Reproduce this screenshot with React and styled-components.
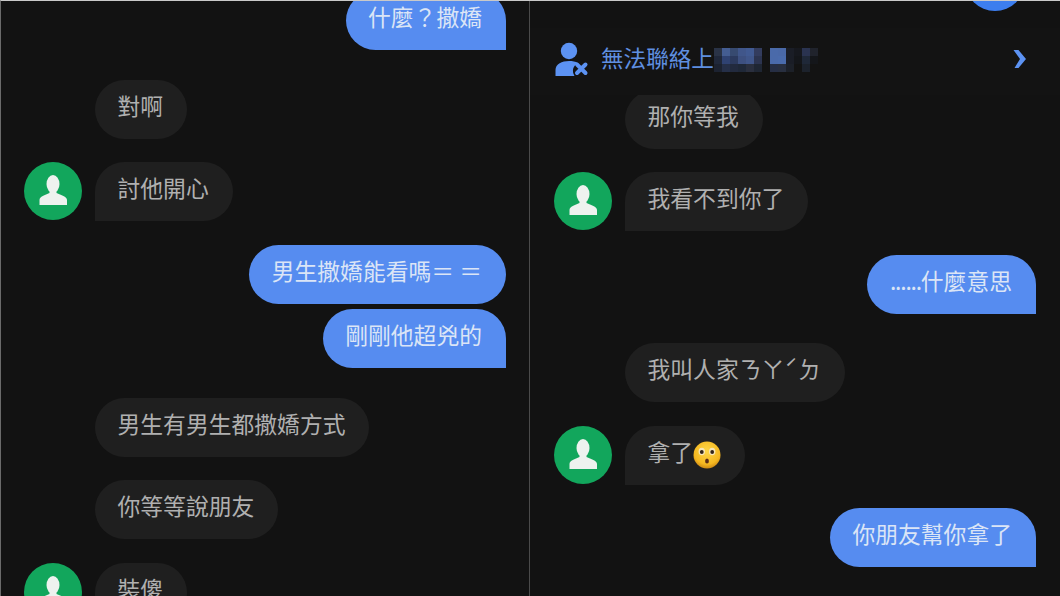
import React from 'react';
import styled, { createGlobalStyle } from 'styled-components';

const GlobalStyle = createGlobalStyle`
  html, body {
    margin: 0;
    padding: 0;
    background: #121212;
  }
`;

const Page = styled.div`
  width: 1060px;
  height: 596px;
  box-sizing: border-box;
  display: grid;
  grid-template-columns: 528px 1px 530px;
  border-top: 1px solid #c9c9c9;
  border-left: 1px solid #6a6a6a;
  background: #121212;
  overflow: hidden;
  font-family: "Noto Sans CJK TC", "Noto Sans", sans-serif;
`;

const Divider = styled.div`
  background: #4a4a4a;
`;

const Panel = styled.div`
  display: flex;
  flex-direction: column;
  padding: 0 ${(p) => p.$right}px 0 ${(p) => p.$left}px;
  min-width: 0;
  overflow: hidden;
`;

const Row = styled.div`
  display: flex;
  flex: none;
  justify-content: ${(p) => (p.$mine ? 'flex-end' : 'flex-start')};
  gap: 13px;
  margin-top: ${(p) => p.$top}px;
  padding-left: ${(p) => (p.$indent ? 71 : 0)}px;
`;

const Bubble = styled.div`
  flex: none;
  height: 59px;
  box-sizing: border-box;
  display: flex;
  align-items: center;
  padding: 0 24px 6px 22.5px;
  font-size: 22.8px;
  line-height: 1;
  white-space: pre;
  color: ${(p) => (p.$mine ? '#dbe5f6' : '#b0b0b0')};
  background: ${(p) => (p.$mine ? '#568cf0' : '#1f1f1f')};
  border-radius: 30px;
  ${(p) => p.$tail && (p.$mine ? 'border-bottom-right-radius: 0;' : 'border-bottom-left-radius: 0;')}
`;

const Dots = styled.span`
  letter-spacing: -1.2px;
`;

const AvatarWrap = styled.div`
  flex: none;
  width: 58px;
  height: 58px;
`;

const TopStub = styled.div`
  flex: none;
  width: 60px;
  height: 60px;
  margin: -50px 11px 0 auto;
  border-radius: 50%;
  background: #3d7eee;
`;

const Banner = styled.div`
  position: relative;
  z-index: 1;
  flex: none;
  height: 67px;
  margin: 17px -24px 0;
  padding: 0 33px 0 25px;
  display: flex;
  align-items: center;
  background: #131313;
  color: #5f8fe0;
  font-size: 22.6px;
  line-height: 1;
`;

const UserIconWrap = styled.div`
  flex: none;
  width: 34px;
  height: 36px;
  margin-bottom: 4px;
`;

const BannerText = styled.span`
  margin: 0 0 6px 12px;
`;

const Mosaic = styled.div`
  display: grid;
  grid-template-columns: repeat(13, 8px);
  grid-auto-rows: 8px;
  margin-bottom: 4px;
`;

const Cell = styled.div`
  background: ${(p) => p.$color};
`;

const ChevronWrap = styled.div`
  flex: none;
  width: 14px;
  height: 20px;
  margin: 0 0 5px auto;
`;

const Avatar = () => (
  <AvatarWrap>
    <svg width="58" height="58" viewBox="0 0 58 58">
      <circle cx="29" cy="29" r="29" fill="#12a65c" />
      <ellipse cx="29" cy="22" rx="6.5" ry="9" fill="#eef2ef" />
      <path d="M25.5 28 L25.5 31 C21 33 15.5 34.5 15.5 38 L15.5 43 L43 43 L43 38 C43 34.5 37 33 32.5 31 L32.5 28 Z" fill="#eef2ef" />
    </svg>
  </AvatarWrap>
);

const UserOffIcon = () => (
  <UserIconWrap>
    <svg width="34" height="36" viewBox="0 0 34 36">
      <circle cx="14" cy="9" r="8.2" fill="#5c92f2" />
      <path d="M0.5 34 L0.5 28 C0.5 22 7 19 14 19 C17.5 19 20.5 19.5 23 21 C18 23.5 16.5 29 19.5 34 Z" fill="#5c92f2" />
      <path d="M22 22.5 L30.5 31 M30.5 22.5 L22 31" stroke="#5c92f2" strokeWidth="4" strokeLinecap="round" />
    </svg>
  </UserIconWrap>
);

const Surprised = () => (
  <svg width="28" height="28" viewBox="0 0 28 28" style={{ flex: 'none', marginTop: 5 }}>
    <defs>
      <radialGradient id="face" cx="50%" cy="35%" r="70%">
        <stop offset="0%" stopColor="#fdd648" />
        <stop offset="70%" stopColor="#f5b820" />
        <stop offset="100%" stopColor="#c07a10" />
      </radialGradient>
    </defs>
    <circle cx="14" cy="14" r="13.5" fill="url(#face)" />
    <ellipse cx="8.8" cy="10.5" rx="3.2" ry="3.8" fill="#f6e6b8" />
    <ellipse cx="19.2" cy="10.5" rx="3.2" ry="3.8" fill="#f6e6b8" />
    <circle cx="8.8" cy="11" r="1.9" fill="#33251a" />
    <circle cx="19.2" cy="11" r="1.9" fill="#33251a" />
    <ellipse cx="14" cy="20" rx="1.9" ry="2.5" fill="#5a2c16" />
  </svg>
);

const mosaicColors = [
  '#2a3346', '#445d92', '#374a70', '#40568a', '#415a92', '#333c5e', '#131313', '#4a6aaa', '#4a69a8', '#1a1d26', '#16181e', '#2a3350', '#20232c',
  '#20283a', '#2f4272', '#2c3a5e', '#3d5080', '#40568a', '#2c3450', '#131313', '#4a6aaa', '#4a6bac', '#1a1d26', '#14161a', '#1f2838', '#14161a',
  '#1c2230', '#252f48', '#222a3e', '#1f2838', '#2a2f3e', '#1f2633', '#131313', '#262e44', '#282f40', '#1c2028', '#131313', '#1c222c', '#131313',
];

const leftMessages = [
  { text: '什麼？撒嬌', mine: true, tail: true, top: -10 },
  { text: '對啊', top: 30 },
  { text: '討他開心', avatar: true, tail: true, top: 23 },
  { text: '男生撒嬌能看嗎＝ ＝', mine: true, top: 24 },
  { text: '剛剛他超兇的', mine: true, tail: true, top: 5 },
  { text: '男生有男生都撒嬌方式', top: 30 },
  { text: '你等等說朋友', top: 23 },
  { text: '裝傻', avatar: true, tail: true, top: 24 },
];

const rightMessages = [
  { text: '那你等我', top: -5 },
  { text: '我看不到你了', avatar: true, tail: true, top: 23 },
  { dots: '......', text: '什麼意思', mine: true, tail: true, top: 24 },
  { text: '我叫人家ㄋㄚˊㄉ', top: 29 },
  { text: '拿了', avatar: true, tail: true, emoji: true, top: 24 },
  { text: '你朋友幫你拿了', mine: true, tail: true, top: 23 },
];

const Message = ({ text, dots, mine, tail, avatar, emoji, top }) => (
  <Row $mine={mine} $top={top} $indent={!mine && !avatar}>
    {avatar && <Avatar />}
    <Bubble $mine={mine} $tail={tail}>
      <span>
        {dots && <Dots>{dots}</Dots>}
        {text}
      </span>
      {emoji && <Surprised />}
    </Bubble>
  </Row>
);

export default function App() {
  return (
    <>
      <GlobalStyle />
      <Page>
        <Panel $left={23} $right={23}>
          {leftMessages.map((m) => (
            <Message key={m.text} {...m} />
          ))}
        </Panel>
        <Divider />
        <Panel $left={24} $right={24}>
          <TopStub />
          <Banner>
            <UserOffIcon />
            <BannerText>無法聯絡上</BannerText>
            <Mosaic>
              {mosaicColors.map((c, i) => (
                <Cell key={i} $color={c} />
              ))}
            </Mosaic>
            <ChevronWrap>
              <svg width="14" height="20" viewBox="0 0 14 20">
                <path d="M0.5 1 L5.5 1 L13 10 L5.5 19 L1.5 19 L7 10 Z" fill="#5c92f2" />
              </svg>
            </ChevronWrap>
          </Banner>
          {rightMessages.map((m) => (
            <Message key={m.text} {...m} />
          ))}
        </Panel>
      </Page>
    </>
  );
}
